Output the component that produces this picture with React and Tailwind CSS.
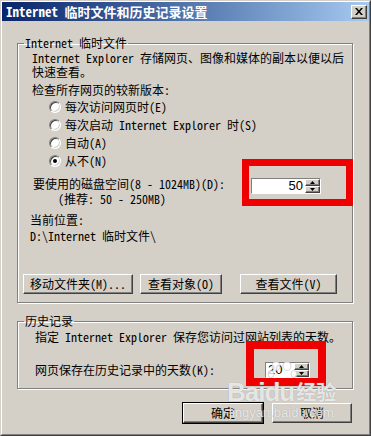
import React from 'react';

const FONT = "font-['Noto_Sans_Mono_CJK_SC','Noto_Sans_CJK_SC',monospace]";

const raised =
  'border border-t-white border-l-white border-r-[#404040] border-b-[#404040] shadow-[inset_-1px_-1px_0_#808080] bg-[#d4d0c8]';

const Btn = ({ w, children, def }) => (
  <div
    className={`${raised} ${w} flex h-[20px] items-center justify-center text-[12px] leading-[14px] ${
      def ? 'outline outline-1 outline-black' : ''
    }`}
  >
    {children}
  </div>
);

const Radio = ({ checked, label }) => (
  <div className="flex h-[18px] items-center pl-[31px]">
    <span className="flex h-[12px] w-[12px] items-center justify-center rounded-full border border-t-[#808080] border-l-[#808080] border-r-white border-b-white bg-white shadow-[inset_1px_1px_0_#404040,inset_-1px_-1px_0_#d4d0c8]">
      {checked && <span className="h-[4px] w-[4px] rounded-full bg-black" />}
    </span>
    <span className="ml-[4px] leading-[14px]">{label}</span>
  </div>
);

const Arrow = ({ up }) => (
  <svg width="5" height="3" viewBox="0 0 5 3">
    <path d={up ? 'M2.5 0 L5 3 L0 3 Z' : 'M0 0 L5 0 L2.5 3 Z'} fill="#000" />
  </svg>
);

const SpinBox = ({ w, value, right }) => (
  <div className={`${w} flex h-[16px] border border-t-[#808080] border-l-[#808080] border-r-white border-b-white shadow-[inset_1px_1px_0_#404040]`}>
    <div
      className={`flex flex-1 items-center bg-white font-['Liberation_Sans',sans-serif] text-[13px] leading-[14px] ${
        right ? 'justify-end pr-[2px]' : 'justify-start pl-[2px]'
      }`}
    >
      {value}
    </div>
    <div className="flex w-[15px] flex-col">
      <div className={`${raised} flex flex-1 items-center justify-center`}>
        <Arrow up />
      </div>
      <div className={`${raised} flex flex-1 items-center justify-center`}>
        <Arrow />
      </div>
    </div>
  </div>
);

const Group = ({ title, className, children }) => (
  <fieldset
    className={`w-[336px] border border-[#808080] shadow-[inset_1px_1px_0_#fff,1px_1px_0_#fff] ${className}`}
  >
    <legend className="ml-[6px] px-[1px] text-[12px] leading-[14px]">{title}</legend>
    {children}
  </fieldset>
);

export default function App() {
  return (
    <div className={`relative h-[436px] w-[371px] overflow-hidden border border-t-[#d4d0c8] border-l-[#d4d0c8] border-r-[#404040] border-b-[#404040] bg-[#d4d0c8] text-black ${FONT}`}>
      <div className="h-full border border-t-white border-l-white border-r-[#808080] border-b-[#808080]">
        <div className="flex h-[19px] items-center justify-between bg-gradient-to-r from-[#0a246a] to-[#a6caf0] pl-[4px] pr-[2px]">
          <span className="text-[13px] font-bold leading-[15px] text-white">Internet 临时文件和历史记录设置</span>
          <div className={`${raised} flex h-[14px] w-[16px] items-center justify-center`}>
            <svg width="8" height="7" viewBox="0 0 8 7">
              <path d="M0 0h2l2 2.5L6 0h2L5 3.5 8 7H6L4 4.5 2 7H0l3-3.5z" fill="#000" />
            </svg>
          </div>
        </div>

        <div className="pl-[15px] text-[12px] leading-[14px]">
          <Group title="Internet 临时文件" className="mt-[15px] pb-[8px]">
            <p className="mt-[1px] pl-[14px]">
              Internet Explorer 存储网页、图像和媒体的副本以便以后
              <br />
              快速查看。
            </p>
            <p className="mt-[4px] pl-[14px]">检查所存网页的较新版本:</p>
            <div className="mt-[1px]">
              <Radio label="每次访问网页时(E)" />
              <Radio label="每次启动 Internet Explorer 时(S)" />
              <Radio label="自动(A)" />
              <Radio checked label="从不(N)" />
            </div>
            <div className="mt-[6px] flex items-start pl-[15px]">
              <div className="leading-[15px]">
                <p>要使用的磁盘空间(8 - 1024MB)(D):</p>
                <p className="pl-[25px]">(推荐: 50 - 250MB)</p>
              </div>
              <div className="ml-auto mr-[31px] mt-[2px]">
                <SpinBox w="w-[70px]" value="50" right />
              </div>
            </div>
            <p className="mt-[7px] pl-[12px]">当前位置:</p>
            <p className="mt-[2px] pl-[12px]">D:\Internet 临时文件\</p>
            <div className="mt-[31px] flex pl-[5px]">
              <Btn w="w-[110px]">移动文件夹(M)...</Btn>
              <div className="ml-[7px]">
                <Btn w="w-[82px]">查看对象(O)</Btn>
              </div>
              <div className="ml-[18px]">
                <Btn w="w-[97px]">查看文件(V)</Btn>
              </div>
            </div>
          </Group>

          <Group title="历史记录" className="mt-[11px] pb-[10px]">
            <p className="mt-[2px] pl-[17px]">指定 Internet Explorer 保存您访问过网站列表的天数。</p>
            <div className="mt-[18px] flex h-[16px] items-center pl-[17px]">
              <span>网页保存在历史记录中的天数(K):</span>
              <div className="ml-auto mr-[42px]">
                <SpinBox w="w-[45px]" value="20" />
              </div>
            </div>
          </Group>

          <div className="mt-[14px] flex gap-[9px] pl-[166px]">
            <Btn w="w-[80px]" def>确定</Btn>
            <Btn w="w-[80px]">取消</Btn>
          </div>
        </div>
      </div>

      {/* annotation boxes */}
      <div className="pointer-events-none absolute left-[241px] top-[158px] h-[47px] w-[111px] border-[7px] border-[#ee0000]" />
      <div className="pointer-events-none absolute left-[245px] top-[340px] h-[45px] w-[80px] border-[8px] border-[#ee0000]" />

      {/* watermark */}
      <div className="pointer-events-none absolute left-[226px] top-[360px] whitespace-nowrap font-['Liberation_Sans',sans-serif] text-white/75 [text-shadow:0_0_1px_#999]">
        <svg width="32" height="20" viewBox="0 0 32 20" className="ml-[40px]">
          <g fill="#fff" fillOpacity="0.8" stroke="#bbb" strokeWidth="0.6">
            <ellipse cx="9" cy="5" rx="4" ry="4.5" />
            <ellipse cx="20" cy="5" rx="4" ry="4.5" />
            <ellipse cx="4" cy="13" rx="3" ry="3.5" />
            <ellipse cx="27" cy="13" rx="3" ry="3.5" />
          </g>
        </svg>
        <div className="flex items-end">
          <span className="text-[26px] font-bold leading-[22px] tracking-[-1px]">Baidu</span>
          <span className={`ml-[2px] text-[20px] font-bold leading-[22px] ${FONT}`}>经验</span>
        </div>
        <div className="mt-[3px] pl-[2px] text-[13px] leading-[14px]">jingyan.baidu.com</div>
      </div>
    </div>
  );
}
